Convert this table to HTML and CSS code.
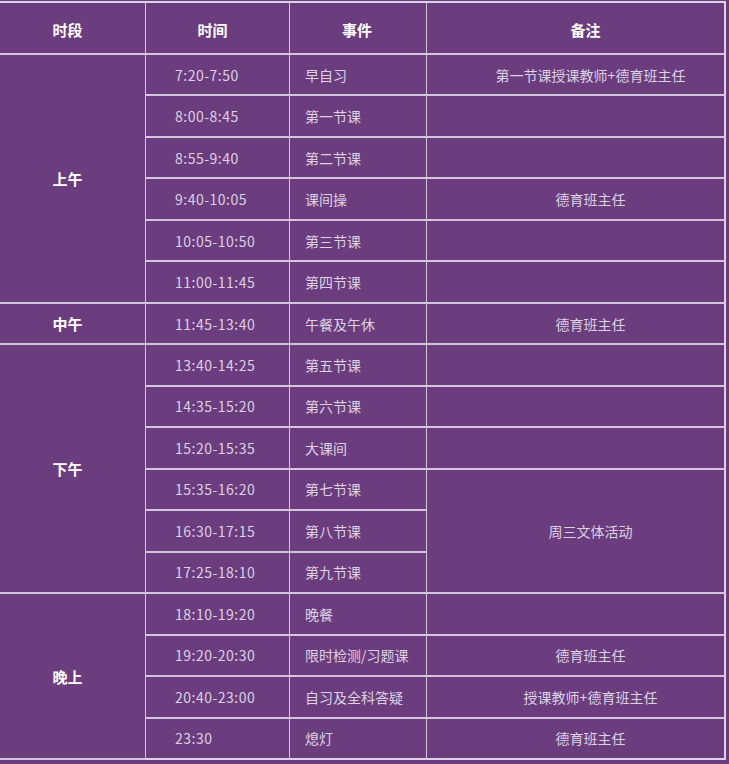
FILE: index.html
```html
<!DOCTYPE html>
<html lang="zh">
<head>
<meta charset="utf-8">
<title>作息时间表</title>
<link rel="stylesheet" href="styles.css">
</head>
<body>
<table class="schedule">
  <colgroup>
    <col class="c-seg"><col class="c-time"><col class="c-event"><col class="c-note">
  </colgroup>
  <thead>
    <tr class="head">
      <th class="h-seg">时段</th>
      <th class="h-time">时间</th>
      <th class="h-event">事件</th>
      <th class="h-note">备注</th>
    </tr>
  </thead>
  <tbody>
    <tr><td class="seg" rowspan="6">上午</td><td class="time">7:20-7:50</td><td class="event">早自习</td><td class="note">第一节课授课教师+德育班主任</td></tr>
    <tr><td class="time">8:00-8:45</td><td class="event">第一节课</td><td class="note"></td></tr>
    <tr><td class="time">8:55-9:40</td><td class="event">第二节课</td><td class="note"></td></tr>
    <tr><td class="time">9:40-10:05</td><td class="event">课间操</td><td class="note">德育班主任</td></tr>
    <tr><td class="time">10:05-10:50</td><td class="event">第三节课</td><td class="note"></td></tr>
    <tr><td class="time">11:00-11:45</td><td class="event">第四节课</td><td class="note"></td></tr>
    <tr><td class="seg">中午</td><td class="time">11:45-13:40</td><td class="event">午餐及午休</td><td class="note">德育班主任</td></tr>
    <tr><td class="seg" rowspan="6">下午</td><td class="time">13:40-14:25</td><td class="event">第五节课</td><td class="note"></td></tr>
    <tr><td class="time">14:35-15:20</td><td class="event">第六节课</td><td class="note"></td></tr>
    <tr><td class="time">15:20-15:35</td><td class="event">大课间</td><td class="note"></td></tr>
    <tr><td class="time">15:35-16:20</td><td class="event">第七节课</td><td class="note" rowspan="3">周三文体活动</td></tr>
    <tr><td class="time">16:30-17:15</td><td class="event">第八节课</td></tr>
    <tr><td class="time">17:25-18:10</td><td class="event">第九节课</td></tr>
    <tr><td class="seg" rowspan="4">晚上</td><td class="time">18:10-19:20</td><td class="event">晚餐</td><td class="note"></td></tr>
    <tr><td class="time">19:20-20:30</td><td class="event">限时检测/习题课</td><td class="note">德育班主任</td></tr>
    <tr><td class="time">20:40-23:00</td><td class="event">自习及全科答疑</td><td class="note">授课教师+德育班主任</td></tr>
    <tr><td class="time">23:30</td><td class="event">熄灯</td><td class="note">德育班主任</td></tr>
  </tbody>
</table>
</body>
</html>
```

FILE: styles.css
```css
html, body {
  margin: 0;
  padding: 0;
  background: #6b3d7e;
}

body {
  font-family: "Noto Sans CJK SC", "Noto Sans", sans-serif;
  overflow: hidden;
}

.schedule {
  table-layout: fixed;
  border-collapse: separate;
  border-spacing: 0;
  width: 728px;
  margin: 1px 0 0 -2px;
  border-top: 2px solid #ddd3e6;
  background: #6b3d7e;
}

.c-seg { width: 148px; }
.c-time { width: 144px; }
.c-event { width: 137px; }
.c-note { width: 299px; }

.schedule th,
.schedule td {
  box-sizing: border-box;
  padding: 0;
  border-right: 1px solid #d3c6dc;
  border-bottom: 2px solid #d3c6dc;
  vertical-align: middle;
  white-space: nowrap;
}

.schedule th:last-child,
.schedule td.note {
  border-right: 2px solid #ddd3e6;
}

.schedule .head {
  height: 52px;
}

.schedule .head th {
  color: #ffffff;
  font-size: 15px;
  font-weight: 700;
  text-align: center;
  padding-top: 2px;
}

.schedule th.h-seg { padding-right: 8px; }
.schedule th.h-time { padding-right: 10px; }
.schedule th.h-event { padding-right: 2px; }
.schedule th.h-note { padding-left: 20px; }

.schedule tbody tr {
  height: 41.47px;
}

.schedule td.seg {
  color: #ffffff;
  font-size: 15px;
  font-weight: 700;
  text-align: center;
  padding-right: 8px;
}

.schedule td.time,
.schedule td.event,
.schedule td.note {
  color: #dcd2e3;
  font-size: 14px;
  font-weight: 400;
}

.schedule td.time {
  text-align: left;
  padding-left: 29px;
  letter-spacing: 0.5px;
}

.schedule td.event {
  text-align: left;
  padding-left: 15px;
}

.schedule td.note {
  text-align: center;
  padding-left: 30px;
}

.schedule tbody tr:last-child td {
  border-bottom-color: #ddd3e6;
}
```
